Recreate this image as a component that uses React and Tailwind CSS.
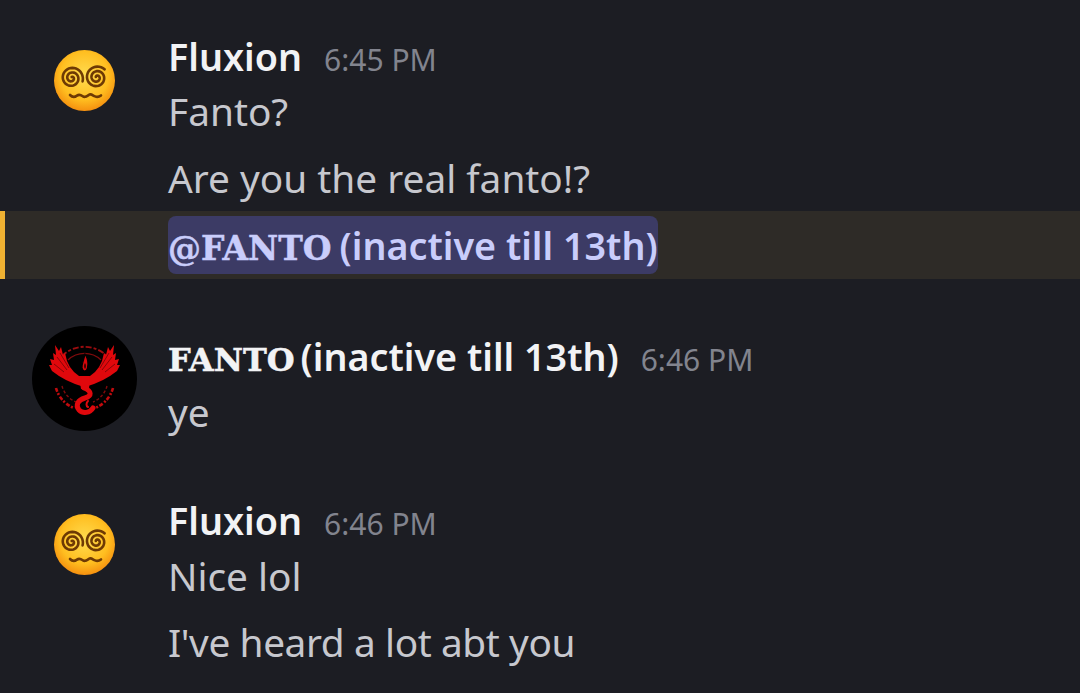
const body = "font-['Noto_Sans','Open_Sans',sans-serif]";

function Spiral({ cx, cy, end }) {
  const pts = [];
  const total = Math.PI * 4.6;
  for (let i = 0; i <= 80; i++) {
    const f = i / 80;
    const r = 1 + f * 10.4;
    const a = end - total * (1 - f);
    pts.push(`${(cx + r * Math.cos(a)).toFixed(2)},${(cy + r * Math.sin(a)).toFixed(2)}`);
  }
  return <polyline points={pts.join(" ")} fill="none" stroke="#6e3a04" strokeWidth="2.6" strokeLinecap="round" />;
}

function DizzyEmoji({ id }) {
  return (
    <svg width="61" height="61" viewBox="0 0 61 61" className="shrink-0">
      <defs>
        <radialGradient id={id} cx="50%" cy="42%" r="58%">
          <stop offset="0%" stopColor="#ffdc50" />
          <stop offset="68%" stopColor="#ffbe20" />
          <stop offset="100%" stopColor="#f5900f" />
        </radialGradient>
      </defs>
      <circle cx="30.5" cy="30.5" r="30.5" fill={`url(#${id})`} />
      <Spiral cx={17.7} cy={28} end={0.3} />
      <Spiral cx={42.7} cy={27.5} end={-0.8} />
      <path d="M16 45c2.5 2.6 4.5 2.4 7 .6s4-.6 6 .8 4-.2 6-1.6 4 .8 6 1.6 4 .6 6-1" fill="none" stroke="#6e3a04" strokeWidth="2.6" strokeLinecap="round" />
    </svg>
  );
}

function Phoenix() {
  const wing = "M52 61 L43 58 L34 54 L27 50 L20 45 L17 39 L20 39 L18 33 L22 34 L21 27 L24 29 L23 19 L27 25 L29 21 L31 29 L33 27 L35 35 L38 41 L42 46 L47 50 L50 54Z";
  const slits = "M22 38 L32 46 M25 31 L35 44 M28 27 L37 42";
  return (
    <svg width="105" height="105" viewBox="0 0 105 105" className="shrink-0">
      <circle cx="52.5" cy="52.5" r="52.5" fill="#000" />
      <path d="M30 30 A32 32 0 0 1 75 30" fill="none" stroke="#9c0c0f" strokeWidth="1.8" strokeDasharray="6 2 3 2" />
      <path d="M24 62 A30 30 0 0 0 42 82" fill="none" stroke="#c00b0e" strokeWidth="2.6" strokeDasharray="4 1.5 2 2" />
      <path d="M30 60 A24 24 0 0 0 44 76" fill="none" stroke="#7f0a0c" strokeWidth="1.4" strokeDasharray="3 2" />
      <path d="M81 62 A30 30 0 0 1 63 82" fill="none" stroke="#c00b0e" strokeWidth="2.6" strokeDasharray="4 1.5 2 2" />
      <path d="M75 60 A24 24 0 0 1 61 76" fill="none" stroke="#7f0a0c" strokeWidth="1.4" strokeDasharray="3 2" />
      <path d="M36 34 A24 24 0 0 1 69 34" fill="none" stroke="#7f0a0c" strokeWidth="1.2" />
      <path d={wing} fill="#e0080c" />
      <path d={wing} fill="#e0080c" transform="translate(105 0) scale(-1 1)" />
      <path d={slits} stroke="#7a0507" strokeWidth="0.9" />
      <path d={slits} stroke="#7a0507" strokeWidth="0.9" transform="translate(105 0) scale(-1 1)" />
      <path d="M47 50 L58 50 L57 63 L49 63Z" fill="#e0080c" />
      <path d="M53 28 C56 33 56.5 38 55.5 42 C54.5 46 51 46 50 42 C49.5 38 52 34 53 28Z" fill="#d9070b" stroke="#000" strokeWidth="1.2" />
      <path d="M53 37 C54 39 54 41.5 53 43 C52 41.5 52 39 53 37Z" fill="#000" />
      <path d="M52 62 C60 65 60 70 53 72 C46 74 43 79 47 84 C51 88 58 87 61 82" fill="none" stroke="#e0080c" strokeWidth="5" strokeLinecap="round" />
      <path d="M56 75 C54 77 54 80 56 81" fill="none" stroke="#e0080c" strokeWidth="2" strokeLinecap="round" />
    </svg>
  );
}

function Slab({ children, size = "text-[32px]" }) {
  return <span className={`font-['DejaVu_Serif',serif] font-bold ${size} [-webkit-text-stroke:0.5px_currentColor]`}>{children}</span>;
}

function Header({ children, time }) {
  return (
    <div className="flex items-baseline h-[50px]">
      <span className="text-[37.7px] font-semibold text-[#f2f3f5] leading-[50px] whitespace-nowrap">{children}</span>
      <span className="ml-[22px] text-[30px] text-[#82848e] leading-[50px] whitespace-nowrap">{time}</span>
    </div>
  );
}

function Line({ children, className = "" }) {
  return <div className={`text-[38.8px] text-[#c7c8ce] leading-[50px] whitespace-nowrap ${className}`}>{children}</div>;
}

export default function App() {
  return (
    <div className={`w-[1080px] h-[693px] overflow-hidden bg-[#1c1d23] ${body}`}>
      <div className="flex pl-[32px] pt-[32px]">
        <div className="w-[105px] flex justify-center pt-[18px]"><DizzyEmoji id="dz1" /></div>
        <div className="ml-[31px]">
          <Header time="6:45 PM">Fluxion</Header>
          <Line className="mt-[4px]">Fanto?</Line>
          <Line className="mt-[17px]">Are you the real fanto!?</Line>
        </div>
      </div>
      <div className="mt-[8px] h-[68px] bg-[#2e2b27] border-l-[5px] border-[#f0b232] pl-[163px] flex items-center">
        <span className="inline-block h-[58px] leading-[60px] rounded-[8px] bg-[#3c3b65] text-[#c9cdfb] text-[37.7px] font-semibold whitespace-nowrap">
          <Slab size="text-[33px]">@FANTO</Slab>
          <span className="ml-[8px]">(inactive till 13th)</span>
        </span>
      </div>
      <div className="flex pl-[32px] mt-[47px]">
        <Phoenix />
        <div className="ml-[31px] pt-[6px]">
          <Header time="6:46 PM">
            <Slab>FANTO</Slab>
            <span className="ml-[6px]">(inactive till 13th)</span>
          </Header>
          <Line className="mt-[5px]">ye</Line>
        </div>
      </div>
      <div className="flex pl-[32px] mt-[51px]">
        <div className="w-[105px] flex justify-center pt-[26px]"><DizzyEmoji id="dz2" /></div>
        <div className="ml-[31px] pt-[8px]">
          <Header time="6:46 PM">Fluxion</Header>
          <Line className="mt-[5px]">Nice lol</Line>
          <Line className="mt-[16px] tracking-[-0.4px]">I've heard a lot abt you</Line>
        </div>
      </div>
    </div>
  );
}
